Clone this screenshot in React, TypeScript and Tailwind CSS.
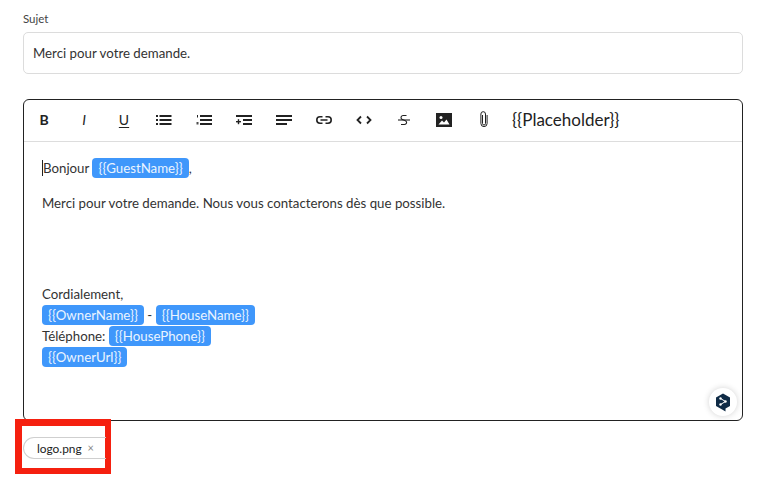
import React from "react";

const Tag = ({ children }: { children: React.ReactNode }) => (
  <span className="inline-block h-[20px] rounded-[4px] bg-[#3f97fb] px-[6px] text-[13.270px] leading-[20px] text-[#eaf4ff] align-top">{children}</span>
);

const Btn = ({ children }: { children: React.ReactNode }) => (
  <span className="flex h-[20px] w-[40px] items-center justify-center text-[#222]">{children}</span>
);

const Bars = ({ kind }: { kind: string }) => (
  <svg width="18" height="14" viewBox="0 0 18 14" fill="#222">
    {kind === "ul" && (<>
      <rect x="1" y="2" width="2" height="2" /><rect x="1" y="6" width="2" height="2" /><rect x="1" y="10" width="2" height="2" />
      <rect x="4.500" y="2" width="12" height="2" /><rect x="4.500" y="6" width="12" height="2" /><rect x="4.500" y="10" width="12" height="2" />
    </>)}
    {kind === "ol" && (<>
      <rect x="2" y="2" width="1" height="2.500" /><rect x="1.500" y="9" width="2" height="2.500" opacity=".8" />
      <rect x="5" y="2" width="12" height="2" /><rect x="5" y="6" width="12" height="2" /><rect x="5" y="10" width="12" height="2" />
    </>)}
    {kind === "indent" && (<>
      <rect x="1" y="2" width="16" height="2" /><rect x="8" y="6" width="9" height="2" /><rect x="8" y="10" width="9" height="2" />
      <rect x="1" y="8" width="5" height="1.400" /><rect x="2.800" y="6.200" width="1.400" height="5" />
    </>)}
    {kind === "align" && (<>
      <rect x="1" y="2" width="16" height="2" /><rect x="1" y="6" width="16" height="2" /><rect x="1" y="10" width="11" height="2" />
    </>)}
  </svg>
);

export default function App() {
  return (
    <div className="relative h-[486px] w-[773px] overflow-hidden bg-white pl-[23px] pr-[30px] pt-[11px] text-[#333] [font-family:Lato,sans-serif]">
      <div className="text-[11.500px] leading-[16px] text-[#444]">Sujet</div>
      <div className="mt-[5px] flex h-[42px] items-center rounded-[5px] border border-[#dcdcdc] px-[9px] text-[13.270px] leading-[20px] text-[#333]">
        Merci pour votre demande.
      </div>

      <div className="mt-[25px] h-[322px] rounded-[6px] border border-[#222]">
        <div className="flex h-[42px] items-center border-b border-[#dddddd] pb-[2px]">
          <Btn><span className="text-[14px] font-bold leading-none">B</span></Btn>
          <Btn><span className="text-[14px] italic leading-none">I</span></Btn>
          <Btn><span className="text-[14px] leading-none underline underline-offset-2">U</span></Btn>
          <Btn><Bars kind="ul" /></Btn>
          <Btn><Bars kind="ol" /></Btn>
          <Btn><Bars kind="indent" /></Btn>
          <Btn><Bars kind="align" /></Btn>
          <Btn>
            <svg width="18" height="14" viewBox="0 0 18 14" fill="none" stroke="#222" strokeWidth="1.600">
              <path d="M7.500 3.800H5a3.200 3.200 0 0 0 0 6.400h2.500M10.500 3.800H13a3.200 3.200 0 0 1 0 6.400h-2.500M5.500 7h7" />
            </svg>
          </Btn>
          <Btn>
            <svg width="18" height="14" viewBox="0 0 18 14" fill="none" stroke="#222" strokeWidth="1.800">
              <path d="M6 3.500 2.500 7 6 10.500M12 3.500 15.500 7 12 10.500" />
            </svg>
          </Btn>
          <Btn>
            <svg width="18" height="16" viewBox="0 0 18 16" fill="none" stroke="#222" strokeWidth="1.100">
              <path d="M3 8h12" />
              <path d="M11.500 3.500H8a2 2 0 0 0-1.500 3.300C7.500 8 11 8 11.500 9.800c.4 1.500-.5 2.700-2.300 2.700H6" />
            </svg>
          </Btn>
          <Btn>
            <svg width="16" height="14" viewBox="0 0 16 14">
              <rect width="16" height="14" fill="#222" />
              <circle cx="5" cy="4.500" r="1.500" fill="#fff" />
              <path d="M2.500 11.500 6 7.500l2 2 2.500-3 3 5z" fill="#fff" />
            </svg>
          </Btn>
          <Btn>
            <svg width="10" height="17" viewBox="0 0 10 17" fill="none" stroke="#222" strokeWidth="1">
              <path d="M3.500 4v8.500a1.500 1.500 0 0 0 3 0V3a2.300 2.300 0 0 0-4.600 0v9.500a3.100 3.100 0 0 0 6.200 0V4" />
            </svg>
          </Btn>
          <span className="ml-[8px] text-[17px] leading-none text-[#222]">{"{{Placeholder}}"}</span>
        </div>

        <div className="relative h-[279px] px-[18px] pt-[16px] text-[13.270px] leading-[21px] text-[#333]">
          <div className="h-[21px]">
            <span className="border-l border-[#222]">Bonjour</span> <Tag>{"{{GuestName}}"}</Tag>,
          </div>
          <div className="mt-[14px]">Merci pour votre demande. Nous vous contacterons dès que possible.</div>
          <div className="mt-[70px]">Cordialement,</div>
          <div className="h-[21px]"><Tag>{"{{OwnerName}}"}</Tag> - <Tag>{"{{HouseName}}"}</Tag></div>
          <div className="h-[21px]">Téléphone: <Tag>{"{{HousePhone}}"}</Tag></div>
          <div className="h-[21px]"><Tag>{"{{OwnerUrl}}"}</Tag></div>

          <div className="absolute bottom-[5px] right-[5px] flex h-[28px] w-[28px] items-center justify-center rounded-full bg-white shadow-[0_0_6px_rgba(0,0,0,0.18)]">
            <svg width="16" height="19" viewBox="0 0 16 19">
              <path d="M8 0.500 15 4.500v8.500l-4.500 2.600v3L8 17 1 13V4.500z" fill="#0f2b46" />
              <path d="M5.500 5.500 10.500 8.500 5.500 11.500" fill="none" stroke="#fff" strokeWidth="1" />
              <circle cx="5.500" cy="5.500" r="1.200" fill="#fff" /><circle cx="10.500" cy="8.500" r="1.200" fill="#fff" /><circle cx="5.500" cy="11.500" r="1.200" fill="#fff" />
            </svg>
          </div>
        </div>
      </div>

      <div className="absolute left-[15px] top-[419px] h-[55px] w-[96px] border-b-[6px] border-l-[7px] border-r-[6px] border-t-[7px] border-[#f5200f]">
        <div className="absolute left-[1px] top-[11px] flex h-[22px] w-[83px] items-center justify-between rounded-l-full border border-r-0 border-[#cfcfcf] pl-[13px] pr-[12px] pt-[1px] text-[11.900px] text-[#222]">
          <span>logo.png</span>
          <span className="text-[11px] text-[#888]">×</span>
        </div>
      </div>
    </div>
  );
}
